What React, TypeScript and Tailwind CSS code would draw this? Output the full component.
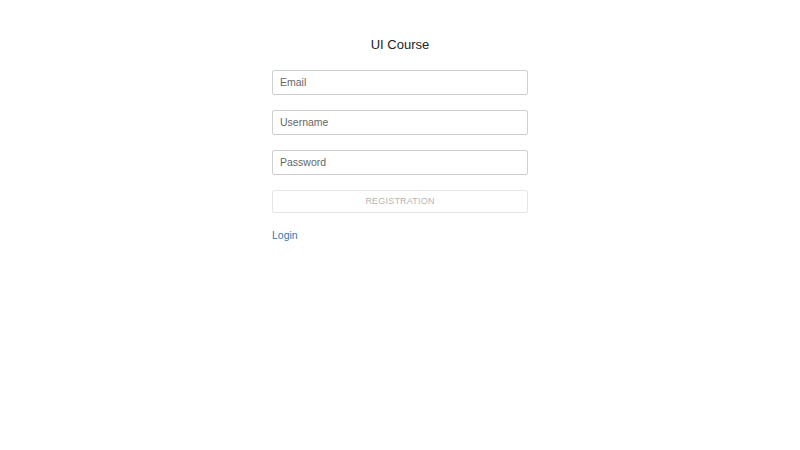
import { useState } from 'react'

export default function App() {
  const [form, setForm] = useState({ email: '', username: '', password: '' })

  return (
    <div className="min-h-screen bg-white font-['Liberation_Sans',Arial,sans-serif]">
      <div className="w-[256px] mx-auto pt-[37px] flex flex-col">
        <h1 className="text-[13px] leading-[15px] text-[#222] text-center">UI Course</h1>

        <form className="mt-[18px] flex flex-col gap-[15px]" onSubmit={e => e.preventDefault()}>
          <Field placeholder="Email" type="email" value={form.email} onChange={v => setForm({ ...form, email: v })} />
          <Field placeholder="Username" type="text" value={form.username} onChange={v => setForm({ ...form, username: v })} />
          <Field placeholder="Password" type="password" value={form.password} onChange={v => setForm({ ...form, password: v })} />
          <button
            type="submit"
            disabled
            className="h-[23px] w-full border border-[#e6e6e6] rounded-[2px] bg-white text-[9px] tracking-[0.2px] uppercase text-[#b5b5b5]"
          >
            Registration
          </button>
        </form>

        <a href="#" className="mt-[16px] text-[10.5px] leading-[13px] text-[#2a7ab8] self-start">Login</a>
      </div>
    </div>
  )
}

const Field = ({ placeholder, type, value, onChange }: { placeholder: string; type: string; value: string; onChange: (v: string) => void }) => (
  <input
    type={type}
    placeholder={placeholder}
    value={value}
    onChange={e => onChange(e.target.value)}
    className="h-[25px] w-full border border-[#cfcfcf] rounded-[2px] px-[7px] pb-[1px] text-[10.5px] text-[#333] placeholder:text-[#666] outline-none"
  />
)
